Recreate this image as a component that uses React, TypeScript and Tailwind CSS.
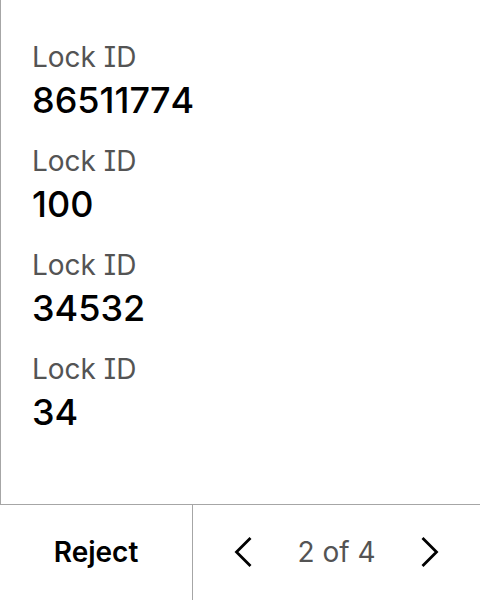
const fields = [
  { label: "Lock ID", value: "86511774" },
  { label: "Lock ID", value: "100" },
  { label: "Lock ID", value: "34532" },
  { label: "Lock ID", value: "34" },
];

function Chevron({ d }: { d: string }) {
  return (
    <svg width="32" height="32" viewBox="0 0 32 32" fill="none" stroke="#000" strokeWidth="2.8" aria-hidden="true">
      <path d={d} />
    </svg>
  );
}

export default function App() {
  return (
    <div className="flex min-h-screen flex-col bg-white font-['Inter',sans-serif] text-black">
      <main className="flex-1 border-l border-[#a6a6a6] pt-10 pr-8 pl-[31px]">
        <dl className="flex flex-col gap-4">
          {fields.map((field, i) => (
            <div key={i}>
              <dt className="text-[28px] leading-[34px] text-[#545454] [font-feature-settings:'cv08','ss02']">{field.label}</dt>
              <dd className="pb-0.5 text-4xl leading-[52px] font-medium [font-kerning:none]">{field.value}</dd>
            </div>
          ))}
        </dl>
      </main>
      <footer className="flex h-24 border-t border-[#a6a6a6]">
        <button type="button" className="w-2/5 pb-0.5 text-[28px] font-semibold">
          Reject
        </button>
        <nav className="flex flex-1 items-center justify-between border-l border-[#a6a6a6] px-8 pb-0.5">
          <button type="button" aria-label="Previous page">
            <Chevron d="M25.5 2 11.5 16 25.5 30" />
          </button>
          <span className="text-[28px] text-[#545454]">2 of 4</span>
          <button type="button" aria-label="Next page">
            <Chevron d="M6.5 2 20.5 16 6.5 30" />
          </button>
        </nav>
      </footer>
    </div>
  );
}
